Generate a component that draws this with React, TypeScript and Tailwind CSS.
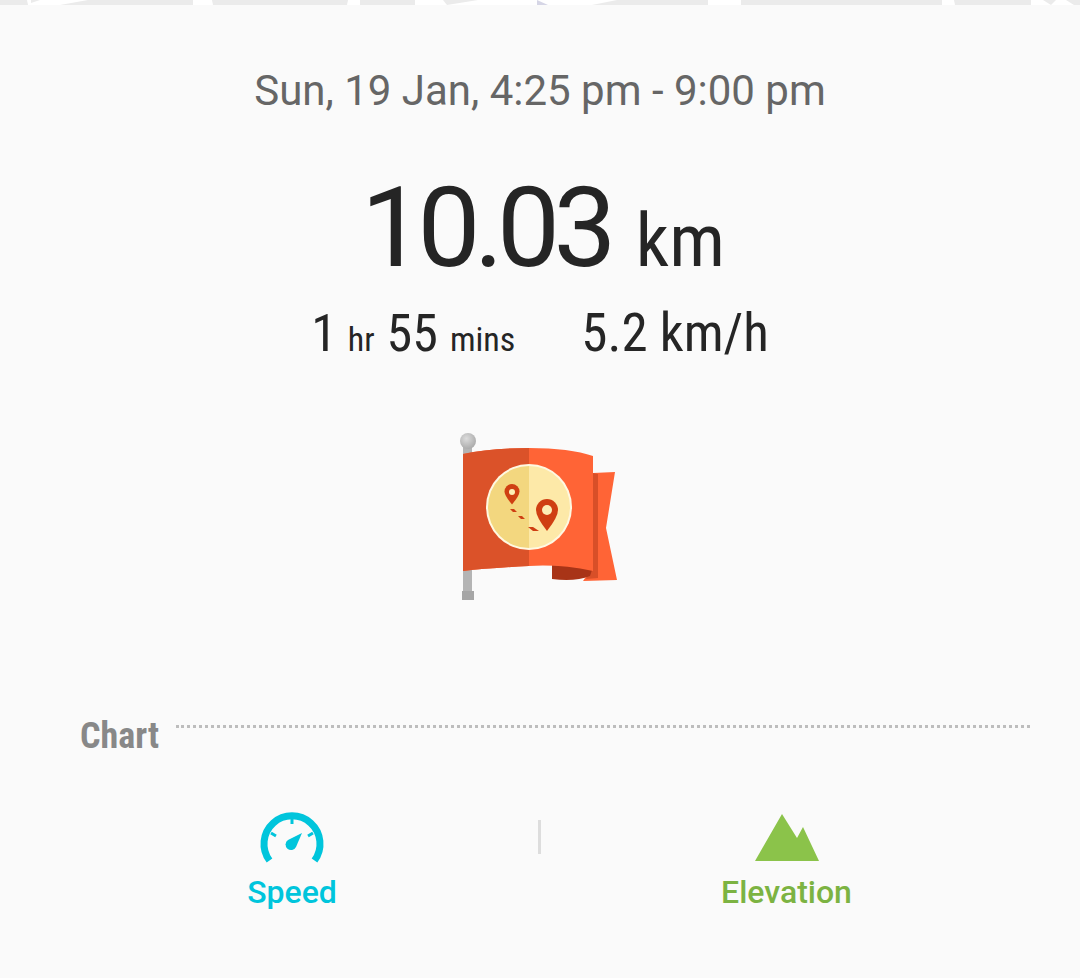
function MapStrip() {
  // bits of the map that peek out above the sheet
  return (
    <svg width="1080" height="5" viewBox="0 0 1080 5" className="block bg-white">
      <g fill="#ebebeb">
        <polygon points="0,0 27,0 28,5 0,5" />
        <polygon points="31,0 40,0 31,3" />
        <polygon points="60,0 193,0 193,5 88,5" transform="matrix(1 0 0 -1 0 5)" />
        <polygon points="212,0 348,0 347,5 213,5" />
        <polygon points="360,0 415,0 415,5 360,5" />
        <polygon points="443,0 478,0 447,5" />
        <polygon points="617,0 708,0 708,5 592,5" />
        <polygon points="741,0 942,0 942,5 741,5" />
        <polygon points="954,0 1031,0 1031,5 955,5" />
        <polygon points="1043,0 1056,0 1051,5" />
        <polygon points="1066,0 1080,0 1080,5 1074,5" />
      </g>
      <polygon points="537,0 548,5 537,5" fill="#d6d6e6" />
    </svg>
  );
}

function Flag() {
  return (
    <svg width="200" height="190" viewBox="0 0 200 190">
      <defs>
        <radialGradient id="ball" cx="0.4" cy="0.35" r="0.7">
          <stop offset="0" stopColor="#dcdcdc" />
          <stop offset="1" stopColor="#a8a8a8" />
        </radialGradient>
      </defs>
      <rect x="23" y="24" width="9" height="148" fill="#b4b4b4" />
      <rect x="22" y="170" width="12" height="9" fill="#a6a6a6" />
      <circle cx="28" cy="20" r="8" fill="url(#ball)" />
      <path d="M153 52 L175 51 L166 107 L177 159 L143 160 L150 150 Z" fill="#ff6436" />
      <path d="M153 52 L158 53 L158 157 L146 158 L150 148 Z" fill="#d84f28" />
      <path d="M112 144 L112 158 Q135 161 150 155 L153 146 Z" fill="#a83417" />
      <path d="M23 33 Q50 27 89 27 Q130 27 153 35 L153 150 Q120 143 89 145 Q50 147 23 150 Z" fill="#ff6436" />
      <path d="M23 33 Q50 27 89 27 L89 145 Q50 147 23 150 Z" fill="#db5229" />
      <circle cx="89" cy="86" r="43" fill="#fff8e1" />
      <path d="M89 45 A41 41 0 0 1 89 127 Z" fill="#fde9a8" />
      <path d="M89 45 A41 41 0 0 0 89 127 Z" fill="#f3d77f" />
      <path d="M72 63 a7.5 7.5 0 0 1 7.5 7.5 q0 4 -7.5 13 q-7.5 -9 -7.5 -13 a7.5 7.5 0 0 1 7.5 -7.5 Z" fill="#cf3f12" />
      <circle cx="72" cy="71" r="3" fill="#fdeeb5" />
      <path d="M107 78 a11 11 0 0 1 11 11 q0 7 -11 21 q-11 -14 -11 -21 a11 11 0 0 1 11 -11 Z" fill="#cf3f12" />
      <circle cx="107" cy="89" r="5" fill="#fdeeb5" />
      <path d="M70 88 L74 88 L77 91 L73 91 Z M78 95 L82 95 L85 98 L81 98 Z M88 106 L93 106 L99 110 L93 110 Z" fill="#cf3f12" />
    </svg>
  );
}

function SpeedIcon() {
  return (
    <svg width="66" height="56" viewBox="0 0 66 56" fill="none">
      <path d="M10.5 50.5 A28 28 0 1 1 55.5 50.5" stroke="#00c5dc" strokeWidth="7" />
      <path d="M33 8 V14 M12 23 L17 26 M54 23 L49 26" stroke="#00c5dc" strokeWidth="3" />
      <path d="M43 23 L37 37 A5.5 5.5 0 1 1 29 30 Z" fill="#00c5dc" />
    </svg>
  );
}

function ElevationIcon() {
  return (
    <svg width="66" height="52" viewBox="0 0 66 52">
      <path d="M1 51 L28 4 L43 28 L49 17 L65 51 Z" fill="#8bc34a" />
    </svg>
  );
}

export default function App() {
  return (
    <div className="h-[978px] w-[1080px] overflow-hidden bg-[#fafafa] font-['Roboto',sans-serif]">
      <MapStrip />
      <div className="mt-[59px] text-center text-[42px] leading-[54px] text-[#666666]">
        Sun, 19 Jan, 4:25 pm - 9:00 pm
      </div>
      <div className="mt-[55px] flex items-baseline justify-center pl-[6px] leading-[110px] text-[#252525] [font-stretch:75%]">
        <span className="text-[112px] tracking-[-6.5px] [font-stretch:88%]">10.03</span>
        <span className="ml-[26px] text-[74px]">km</span>
      </div>
      <div className="mt-[7px] flex items-baseline justify-center leading-[60px] text-[#252525] [font-stretch:75%]">
        <span className="text-[52px]">1</span>
        <span className="ml-[11px] text-[34px]">hr</span>
        <span className="ml-[12px] text-[52px]">55</span>
        <span className="ml-3 text-[34px]">mins</span>
        <span className="ml-[66px] text-[53px]">5.2 km/h</span>
      </div>
      <div className="mt-[52px] flex justify-center">
        <Flag />
      </div>
      <div className="mt-[102px] flex items-center pl-[80px] pr-[50px]">
        <span className="text-[36px] font-bold leading-[46px] text-[#888888] [font-stretch:75%]">Chart</span>
        <div className="ml-[17px] h-0 flex-1 -translate-y-[10px] border-t-[3px] border-dotted border-[#bdbdbd]" />
      </div>
      <div className="mt-[51px] flex items-start">
        <div className="flex w-[538px] flex-col items-center pl-[46px]">
          <SpeedIcon />
          <span className="mt-[6px] text-[32px] font-medium leading-[40px] text-[#00c5dc]">Speed</span>
        </div>
        <div className="mt-[10px] h-[34px] w-[3px] bg-[#dddddd]" />
        <div className="flex flex-1 flex-col items-center pr-[48px]">
          <ElevationIcon />
          <span className="mt-[10px] text-[32px] font-medium leading-[40px] text-[#7cb342]">Elevation</span>
        </div>
      </div>
    </div>
  );
}
